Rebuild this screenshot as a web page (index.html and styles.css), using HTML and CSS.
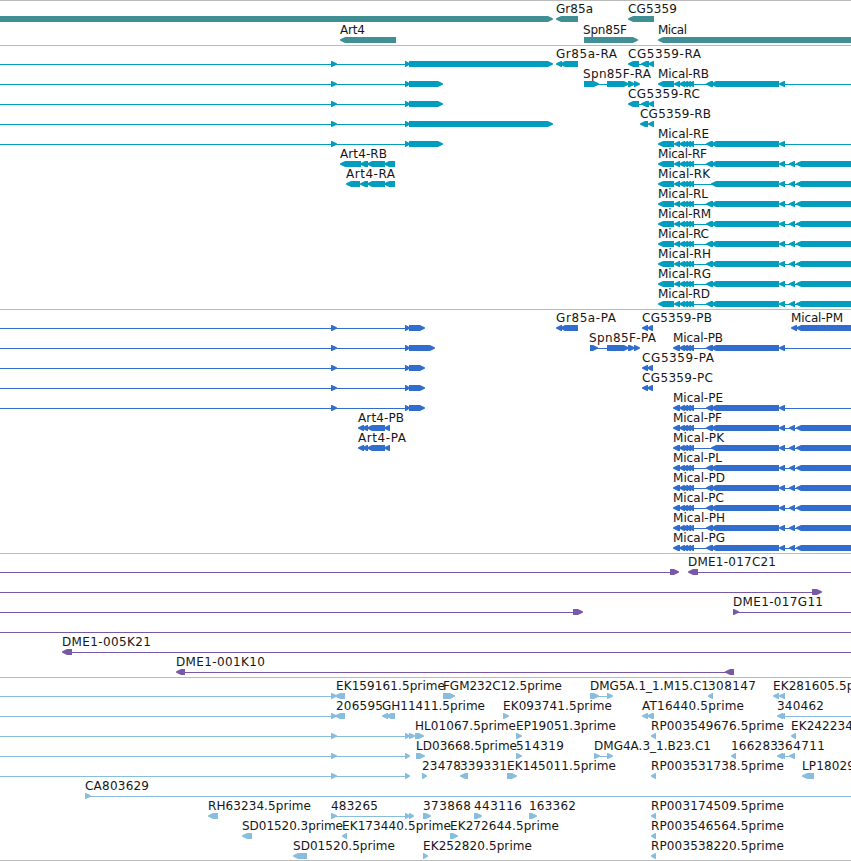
FILE: index.html
```html
<!DOCTYPE html>
<html lang="en">
<head>
<meta charset="utf-8">
<title>Genome tracks</title>
<link rel="stylesheet" href="styles.css">
</head>
<body>
<main class="browser" id="browser"></main>
<script src="tracks.js"></script>
</body>
</html>
```
FILE: styles.css
```css
body {
  margin: 0;
  background: #fff;
}

.browser {
  display: flex;
  flex-direction: column;
  width: 851px;
  height: 861px;
  overflow: hidden;
  border-top: 1px solid #bbb;
  box-sizing: border-box;
}

.track {
  display: flex;
  flex-direction: column;
  padding-bottom: 3px;
  border-bottom: 1px solid #bbb;
}

.row {
  display: block;
  width: 851px;
  height: 20px;
  overflow: visible;
  fill: currentColor;
}

.label {
  fill: #161616;
  font-family: "DejaVu Sans", sans-serif;
  font-size: 12px;
}

.gene { color: #3f8f94; padding-bottom: 2px; }
.gene .row { height: 21px; }
.transcript { color: #009dbf; }
.protein { color: #316dcc; }
.clone { color: #7958a8; }
.est { color: #88bddd; padding-bottom: 2px; }
```
FILE: tracks.js
```js
// Row text: "start-end>" is a forward block, "start-end<" a reverse block,
// "start-end_" a connecting line. Labels are [text, start, end].
const exons = '658-674< 674-680< ';
const micro = '679-685< 682-688< 685-691< 688-694< 693-779_ ';
const ends = {
  open: '706-713< 711-779< 779-785< 785-851_ ',
  full: '706-713< 711-779< 779-785< 785-797_ 789-795< 796-870< ',
  skip: '711-779< 779-785< 785-797_ 789-795< 796-870< '
};
const micalR = kind => exons + micro + ends[kind];
const micalP = kind => '673-680< ' + micro + ends[kind];
const left = end => `0-409_ 331-337> 405-410> 409-${end}> `;
const gr = '556-562< 560-578< ';
const cgR = '628-639< 638-643_ 641-649< 648-654< ';
const cgP = '642-648< 647-653< ';
const artTail = '360-368< 367-385< 384-395< ';
const artP = '358-364< 362-368< 367-385< 384-390< ';

const tracks = [
  { kind: 'gene', rows: [
    ['-10-553> 556-578< 628-654<', ['Gr85a', 556, 593], ['CG5359', 628, 677]],
    ['340-396< 584-638> 658-870<', ['Art4', 340, 365], ['Spn85F', 583, 627], ['Mical', 658, 687]]
  ] },
  { kind: 'transcript', rows: [
    [left(553) + gr + cgR, ['Gr85a-RA', 556, 617], ['CG5359-RA', 628, 701]],
    [left(443) + '584-599> 598-607_ 607-629> 628-635> 634-640> ' + micalR('open'), ['Spn85F-RA', 583, 651], ['Mical-RB', 658, 709]],
    [left(443) + cgR, ['CG5359-RC', 628, 700]],
    [left(553) + '640-648< 648-654<', ['CG5359-RB', 640, 711]],
    [left(443) + micalR('open'), ['Mical-RE', 658, 709]],
    ['340-361< ' + artTail + micalR('full'), ['Art4-RB', 340, 387], ['Mical-RF', 658, 707]],
    ['346-360< ' + artTail + micalR('skip'), ['Art4-RA', 346, 395], ['Mical-RK', 658, 710]],
    [micalR('full'), ['Mical-RL', 658, 708]],
    [micalR('full'), ['Mical-RM', 658, 711]],
    [micalR('full'), ['Mical-RC', 658, 709]],
    [micalR('full'), ['Mical-RH', 658, 711]],
    [micalR('full'), ['Mical-RG', 658, 711]],
    [micalR('full'), ['Mical-RD', 658, 710]]
  ] },
  { kind: 'protein', rows: [
    [left(425) + gr + cgP + '791-797< 796-870<', ['Gr85a-PA', 556, 616], ['CG5359-PB', 642, 712], ['Mical-PM', 791, 843]],
    [left(435) + '590-598> 597-607_ 607-629> 628-635> 634-640> ' + micalP('open'), ['Spn85F-PA', 589, 656], ['Mical-PB', 673, 723]],
    [left(425) + cgP, ['CG5359-PA', 642, 714]],
    [left(425) + cgP, ['CG5359-PC', 642, 713]],
    [left(425) + micalP('open'), ['Mical-PE', 673, 723]],
    [artP + micalP('full'), ['Art4-PB', 358, 404], ['Mical-PF', 673, 722]],
    [artP + micalP('skip'), ['Art4-PA', 358, 406], ['Mical-PK', 673, 724]],
    [micalP('full'), ['Mical-PL', 673, 722]],
    [micalP('full'), ['Mical-PD', 673, 725]],
    [micalP('full'), ['Mical-PC', 673, 724]],
    [micalP('full'), ['Mical-PH', 673, 725]],
    [micalP('full'), ['Mical-PG', 673, 725]]
  ] },
  { kind: 'clone', rows: [
    ['0-675_ 670-679> 688-698< 698-851_', ['DME1-017C21', 688, 776]],
    ['0-815_ 812-822>'],
    ['0-575_ 573-583> 733-739> 737-851_', ['DME1-017G11', 733, 823]],
    ['0-851_'],
    ['62-72< 72-851_', ['DME1-005K21', 62, 151]],
    ['176-185< 185-730_ 725-734<', ['DME1-001K10', 176, 265]]
  ] },
  { kind: 'est', rows: [
    ['0-336_ 331-337> 335-345< 443-455> 590-599> 598-610_ 607-613> 708-713< 773-779< 779-785<',
      ['EK159161.5prime', 336, 445], ['FGM232C12.5prime', 443, 562], ['DMG5A.1_1.M15.C1', 590, 709], ['308147', 708, 756], ['EK281605.5prime', 773, 882]],
    ['0-336_ 331-337> 335-345< 382-388< 386-395< 503-509> 642-648< 647-654< 777-783< 780-785< 785-851_',
      ['206595', 336, 383], ['GH11411.5prime', 382, 485], ['EK093741.5prime', 503, 612], ['AT16440.5prime', 642, 744], ['340462', 777, 824]],
    ['0-408_ 331-337> 405-410> 409-415> 415-424> 516-522> 651-656< 791-796<',
      ['HL01067.5prime', 415, 516], ['EP19051.3prime', 516, 616], ['RP003549676.5prime', 651, 784], ['EK242234.5prime', 791, 900]],
    ['0-408_ 331-337> 405-410> 416-425> 516-522> 594-600> 599-610_ 607-613> 731-736< 777-783< 780-785< 785-792_ 789-795<',
      ['LD03668.5prime', 416, 517], ['514319', 516, 564], ['DMG4A.3_1.B23.C1', 594, 711], ['166283', 731, 778], ['364711', 777, 825]],
    ['0-408_ 331-337> 405-410> 422-427> 460-468< 507-517> 651-656< 802-814<',
      ['23478', 422, 461], ['339331', 460, 507], ['EK145011.5prime', 507, 616], ['RP003531738.5prime', 651, 784], ['LP18029.5prime', 802, 902]],
    ['85-91> 88-851_', ['CA803629', 85, 149]],
    ['208-218< 331-337> 334-408_ 405-410> 409-414> 423-431> 474-482> 529-537> 651-656<',
      ['RH63234.5prime', 208, 311], ['483265', 331, 378], ['373868', 423, 471], ['443116', 474, 522], ['163362', 529, 576], ['RP003174509.5prime', 651, 784]],
    ['242-252< 342-347< 450-458> 651-656<',
      ['SD01520.3prime', 242, 343], ['EK173440.5prime', 342, 451], ['EK272644.5prime', 450, 559], ['RP003546564.5prime', 651, 784]],
    ['293-307< 423-428> 651-656<',
      ['SD01520.5prime', 293, 395], ['EK252820.5prime', 423, 532], ['RP003538220.5prime', 651, 784]]
  ] }
];

const NS = 'http://www.w3.org/2000/svg';
const AXIS = 18;

function add(parent, name, attrs) {
  const el = document.createElementNS(NS, name);
  for (const key in attrs) el.setAttribute(key, attrs[key]);
  parent.appendChild(el);
  return el;
}

function drawSpan(svg, a, b, type) {
  if (type === '_') {
    add(svg, 'rect', { x: a, y: AXIS, width: b - a, height: 1 });
    return;
  }
  // The blunt head narrows in two steps from the full block height to its tip.
  const head = Math.min(6, b - a);
  const forward = type === '>';
  const tip = forward ? b : a;
  const base = forward ? a : b;
  const back = forward ? -1 : 1;
  const outline = [
    [base, -3], [tip + back * head * 0.85, -3], [tip + back * head * 0.4, -1.7], [tip, -0.5],
    [tip, 0.5], [tip + back * head * 0.4, 1.7], [tip + back * head * 0.85, 3], [base, 3]
  ];
  add(svg, 'polygon', { points: outline.map(([x, y]) => `${x},${AXIS + y}`).join(' ') });
}

const root = document.getElementById('browser');
for (const track of tracks) {
  const section = document.createElement('section');
  section.className = 'track ' + track.kind;
  for (const [spans, ...labels] of track.rows) {
    const svg = add(section, 'svg', { class: 'row' });
    for (const m of spans.matchAll(/(-?\d+)-(\d+)([<>_])/g)) drawSpan(svg, +m[1], +m[2], m[3]);
    for (const [text, start, end] of labels) {
      add(svg, 'text', { class: 'label', x: start, y: 12, textLength: end - start }).textContent = text;
    }
  }
  root.appendChild(section);
}
```
